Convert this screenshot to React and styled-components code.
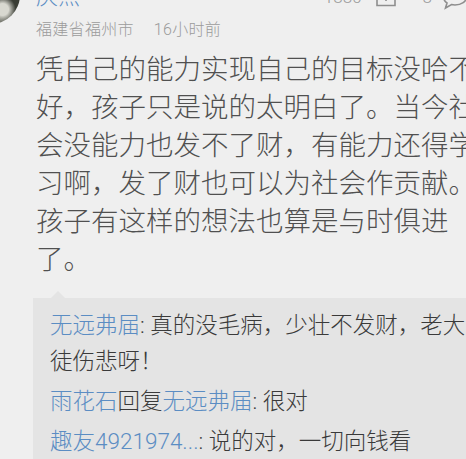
import React from 'react';
import styled, { createGlobalStyle } from 'styled-components';

const GlobalStyle = createGlobalStyle`
  html, body {
    margin: 0;
    padding: 0;
    overflow: hidden;
    background: #efefef;
  }
`;

const replies = [
  { from: '无远弗届', text: '真的没毛病，少壮不发财，老大徒伤悲呀！' },
  { from: '雨花石', to: '无远弗届', text: '很对' },
  { from: '趣友4921974...', text: '说的对，一切向钱看' },
];

const App = () => {
  return (
    <>
      <GlobalStyle />
      <Page>
        <Comment>
          <Avatar />
          <Main>
            <NameRow>
              <Name>庆杰</Name>
              <Stats>
                <Count>1880</Count>
                <RepostIcon />
                <Count $gap={26}>8</Count>
                <BubbleIcon />
              </Stats>
            </NameRow>
            <Meta>
              <span>福建省福州市</span>
              <span>16小时前</span>
            </Meta>
            <Body>
              凭自己的能力实现自己的目标没哈不好，孩子只是说的太明白了。当今社会没能力也发不了财，有能力还得学习啊，发了财也可以为社会作贡献。孩子有这样的想法也算是与时俱进了。
            </Body>
            <ReplyBox>
              {replies.map((r, i) => (
                <Reply key={i}>
                  <User>{r.from}</User>
                  {r.to && (
                    <>
                      回复<User>{r.to}</User>
                    </>
                  )}
                  : {r.text}
                </Reply>
              ))}
            </ReplyBox>
          </Main>
        </Comment>
      </Page>
    </>
  );
};

export default App;

// icons
const RepostIcon = () => (
  <IconSvg width="22" height="20" viewBox="0 0 22 20" $gap={13}>
    <path d="M2 6 V18.5 H20 V6" fill="none" stroke="#8e8e8e" strokeWidth="1.6" />
    <path d="M11 14 V2 M7 6 L11 2 L15 6" fill="none" stroke="#8e8e8e" strokeWidth="1.6" />
  </IconSvg>
);

const BubbleIcon = () => (
  <IconSvg width="26" height="22" viewBox="0 0 26 22" $gap={10}>
    <path
      d="M13 1 C6.5 1 1.5 4.5 1.5 9 C1.5 11.5 3 13.5 5 15 L3.5 20 L9.5 16.6 C10.6 16.9 11.8 17 13 17 C19.5 17 24.5 13.5 24.5 9 C24.5 4.5 19.5 1 13 1 Z"
      fill="none"
      stroke="#8e8e8e"
      strokeWidth="1.6"
    />
  </IconSvg>
);

// Styled Components
const Page = styled.div`
  width: 466px;
  height: 459px;
  overflow: hidden;
  background: #efefef;
  font-family: Roboto, "Noto Sans CJK SC", sans-serif;
  font-weight: 300;
`;

const Comment = styled.div`
  display: flex;
  gap: 16px;
  margin-top: -34px;
`;

const Avatar = styled.div`
  width: 58px;
  height: 58px;
  flex-shrink: 0;
  margin-left: -38px;
  border-radius: 50%;
  background:
    radial-gradient(circle at 70% 75%, #d8d8d0 0 10%, transparent 22%),
    radial-gradient(circle at 80% 60%, #3a3d35 0 20%, transparent 40%),
    linear-gradient(135deg, #6b6e64 0%, #2d2f2a 45%, #8f9186 70%, #3c3e38 100%);
`;

const Main = styled.div`
  display: flex;
  flex-direction: column;
  width: 470px;
  flex-shrink: 0;
`;

const NameRow = styled.div`
  display: flex;
  justify-content: space-between;
  align-items: flex-end;
  width: 432px;
  height: 22px;
  margin-top: 20px;
`;

const Name = styled.span`
  font-size: 22px;
  line-height: 22px;
  color: #5b8dc3;
`;

const Stats = styled.div`
  display: flex;
  align-items: flex-end;
  color: #9a9a9a;
`;

const Count = styled.span`
  font-size: 17px;
  line-height: 17px;
  margin-left: ${(p) => p.$gap || 0}px;
  margin-bottom: 2px;
`;

const IconSvg = styled.svg`
  display: block;
  margin-left: ${(p) => p.$gap}px;
  margin-bottom: ${(p) => (p.$gap === 10 ? -2 : 1)}px;
`;

const Meta = styled.div`
  display: flex;
  gap: 20px;
  margin-top: 12px;
  font-size: 16px;
  line-height: 20px;
  color: #9b9b9b;
  letter-spacing: 0.3px;
`;

const Body = styled.p`
  margin: 11px 0 0;
  width: 445px;
  font-size: 27.5px;
  line-height: 38px;
  color: #505050;
`;

const ReplyBox = styled.div`
  position: relative;
  margin: 19px 0 0 -3px;
  width: 428px;
  padding: 9px 25px 10px 17px;
  background: #e4e4e4;
  display: flex;
  flex-direction: column;
  gap: 4px;

  &::before {
    content: '';
    position: absolute;
    top: -7px;
    left: 18px;
    border-left: 7px solid transparent;
    border-right: 7px solid transparent;
    border-bottom: 7px solid #e4e4e4;
  }
`;

const Reply = styled.div`
  font-size: 22.5px;
  line-height: 36px;
  color: #3a3a3a;
`;

const User = styled.span`
  color: #5b8dc3;
`;
